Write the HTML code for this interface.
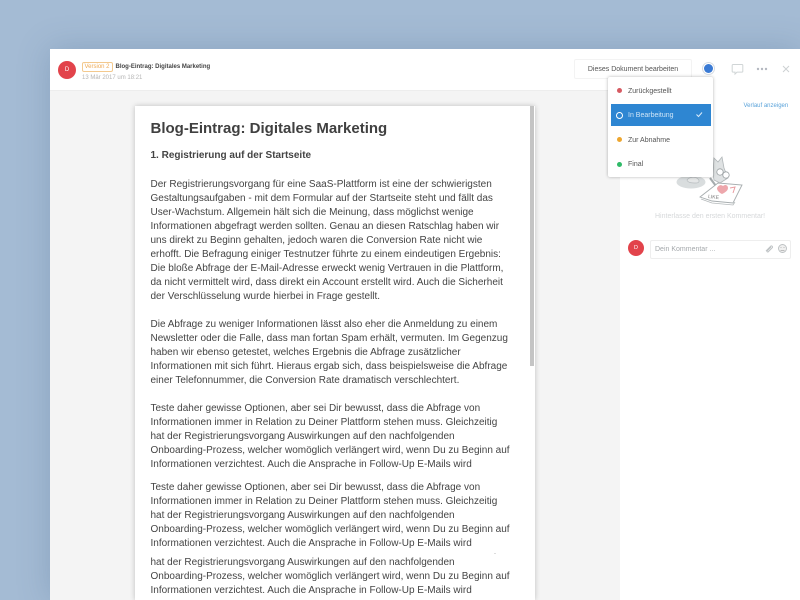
<!DOCTYPE html>
<html><head><meta charset="utf-8">
<style>
html,body{margin:0;padding:0;width:800px;height:600px;overflow:hidden;background:#a4bbd4;font-family:"Liberation Sans",sans-serif}
#app{position:absolute;left:50px;top:49px;width:750px;height:551px;background:#f4f4f4;box-shadow:0 0 30px rgba(60,90,130,.25);overflow:hidden}
.a{position:absolute;white-space:nowrap}
#doc{position:absolute;left:135px;top:106px;width:400px;height:494px;background:#fff;box-shadow:0 0 5px rgba(0,0,0,.22);overflow:hidden}
.l{position:absolute;left:15.5px;white-space:nowrap;font-size:10px;line-height:14px;color:#444}
.m{position:absolute;left:628px;font-size:7px;color:#555;white-space:nowrap;line-height:10px}
.d{position:absolute;left:616.5px;width:5px;height:5px;border-radius:50%}
</style></head><body>
<div id="app"></div>
<div class="a" style="left:50px;top:49px;width:750px;height:41px;background:#fff;border-bottom:1px solid #ededed"></div>
<div class="a" style="left:620px;top:90px;width:180px;height:510px;background:#fff"></div>

<div class="a" style="left:58px;top:61px;width:18px;height:18px;border-radius:50%;background:#e2434b;color:#fff;font-size:6px;line-height:18px;text-align:center">D</div>
<div class="a" style="left:81.5px;top:62px;width:29px;height:8px;border:1px solid #f3c98e;border-radius:2px;color:#eeaa55;font-size:6px;line-height:8px;text-align:center">Version 2</div>
<div class="a" style="left:115.5px;top:63px;font-size:6px;line-height:9px;font-weight:bold;color:#444">Blog-Eintrag: Digitales Marketing</div>
<div class="a" style="left:82px;top:73.5px;font-size:6px;line-height:9px;color:#b5b5b5">13 Mär 2017 um 18:21</div>

<div class="a" style="left:574px;top:59px;width:116px;height:18px;border:1px solid #f3f3f3;border-radius:2px;text-align:center;font-size:7px;line-height:20px;color:#555">Dieses Dokument bearbeiten</div>
<div class="a" style="left:703.5px;top:63.5px;width:9px;height:9px;border-radius:50%;background:#3a7ad4;box-shadow:0 0 0 1px #fff,0 0 0 2px #d6dce3"></div>
<svg class="a" style="left:730px;top:62px" width="15" height="14" viewBox="0 0 15 14"><path d="M3 2.500h9a.8.8 0 0 1 .8.8v6a.8.8 0 0 1-.8.8H7l-2 2v-2H3a.8.8 0 0 1-.8-.8v-6a.8.8 0 0 1 .8-.8z" fill="none" stroke="#d0d5d6" stroke-width="1"/></svg>
<svg class="a" style="left:756px;top:66px" width="12" height="6"><circle cx="2" cy="3" r="1.200" fill="#b4b8c0"/><circle cx="6" cy="3" r="1.200" fill="#b4b8c0"/><circle cx="10" cy="3" r="1.200" fill="#b4b8c0"/></svg>
<svg class="a" style="left:781px;top:64px" width="10" height="10"><path d="M2 2l6 6M8 2l-6 6" stroke="#cdd1d3" stroke-width="1"/></svg>

<div class="a" style="left:743.5px;top:101.5px;font-size:6px;line-height:9px;color:#5ba3da">Verlauf anzeigen</div>

<!-- document -->
<div id="doc">
<div class="l" style="top:12.5px;font-size:15px;line-height:20px;font-weight:bold;color:#404040">Blog-Eintrag: Digitales Marketing</div>
<div class="l" style="top:43px;font-weight:bold">1. Registrierung auf der Startseite</div>
<div class="l" style="top:71.5px">Der Registrierungsvorgang für eine SaaS-Plattform ist eine der schwierigsten</div>
<div class="l" style="top:85.5px">Gestaltungsaufgaben - mit dem Formular auf der Startseite steht und fällt das</div>
<div class="l" style="top:99.5px">User-Wachstum. Allgemein hält sich die Meinung, dass möglichst wenige</div>
<div class="l" style="top:113.5px">Informationen abgefragt werden sollten. Genau an diesen Ratschlag haben wir</div>
<div class="l" style="top:127.5px">uns direkt zu Beginn gehalten, jedoch waren die Conversion Rate nicht wie</div>
<div class="l" style="top:141.5px">erhofft. Die Befragung einiger Testnutzer führte zu einem eindeutigen Ergebnis:</div>
<div class="l" style="top:155.5px">Die bloße Abfrage der E-Mail-Adresse erweckt wenig Vertrauen in die Plattform,</div>
<div class="l" style="top:169.5px">da nicht vermittelt wird, dass direkt ein Account erstellt wird. Auch die Sicherheit</div>
<div class="l" style="top:183.5px">der Verschlüsselung wurde hierbei in Frage gestellt.</div>
<div class="l" style="top:211.5px">Die Abfrage zu weniger Informationen lässt also eher die Anmeldung zu einem</div>
<div class="l" style="top:225.5px">Newsletter oder die Falle, dass man fortan Spam erhält, vermuten. Im Gegenzug</div>
<div class="l" style="top:239.5px">haben wir ebenso getestet, welches Ergebnis die Abfrage zusätzlicher</div>
<div class="l" style="top:253.5px">Informationen mit sich führt. Hieraus ergab sich, dass beispielsweise die Abfrage</div>
<div class="l" style="top:267.5px">einer Telefonnummer, die Conversion Rate dramatisch verschlechtert.</div>
<div class="l" style="top:295.5px">Teste daher gewisse Optionen, aber sei Dir bewusst, dass die Abfrage von</div>
<div class="l" style="top:309.5px">Informationen immer in Relation zu Deiner Plattform stehen muss. Gleichzeitig</div>
<div class="l" style="top:323.5px">hat der Registrierungsvorgang Auswirkungen auf den nachfolgenden</div>
<div class="l" style="top:337.5px">Onboarding-Prozess, welcher womöglich verlängert wird, wenn Du zu Beginn auf</div>
<div class="l" style="top:351.5px">Informationen verzichtest. Auch die Ansprache in Follow-Up E-Mails wird</div>
<div class="l" style="top:374.5px">Teste daher gewisse Optionen, aber sei Dir bewusst, dass die Abfrage von</div>
<div class="l" style="top:388.5px">Informationen immer in Relation zu Deiner Plattform stehen muss. Gleichzeitig</div>
<div class="l" style="top:402.5px">hat der Registrierungsvorgang Auswirkungen auf den nachfolgenden</div>
<div class="l" style="top:416.5px">Onboarding-Prozess, welcher womöglich verlängert wird, wenn Du zu Beginn auf</div>
<div class="l" style="top:430.5px">Informationen verzichtest. Auch die Ansprache in Follow-Up E-Mails wird</div>
<div class="l" style="top:449.5px">hat der Registrierungsvorgang Auswirkungen auf den nachfolgenden</div>
<div class="l" style="top:463.5px">Onboarding-Prozess, welcher womöglich verlängert wird, wenn Du zu Beginn auf</div>
<div class="l" style="top:477.5px">Informationen verzichtest. Auch die Ansprache in Follow-Up E-Mails wird</div>
<div style="position:absolute;left:359px;top:447px;width:2px;height:1px;background:#ddd"></div>
<div style="position:absolute;left:395px;top:0;width:4px;height:260px;background:#c4c4c4"></div>
</div>

<!-- illustration -->
<svg class="a" style="left:670px;top:150px" width="80" height="60" viewBox="0 0 80 60">
<ellipse cx="21" cy="32" rx="14.500" ry="6.500" fill="#d9ddde"/>
<path d="M17 30c2-3 8-4 11-1c2 2 1 4-2 4c-4 0-8 0-9-3z" fill="#e4e6e7" stroke="#b8bdbf" stroke-width=".7"/>
<path d="M43 24L44 8L48 12L52 7L54 18L58 28L50 33L44 30z" fill="#dfe2e3" stroke="#b0b6b8" stroke-width=".8"/>
<circle cx="50" cy="22" r="3.200" fill="#fff" stroke="#9aa0a2" stroke-width=".8"/>
<circle cx="56" cy="25" r="3.200" fill="#fff" stroke="#9aa0a2" stroke-width=".8"/>
<path d="M40 28l9 12" fill="none" stroke="#a6acae" stroke-width="2.200"/>
<path d="M30 47L48 33L72 35L63 53L42 51z" fill="#fff" stroke="#a7adaf" stroke-width=".9"/>
<path d="M31 49L42 53L63 55L65 52" fill="none" stroke="#b4b9bb" stroke-width=".8"/>
<path d="M47 38c2-4 5-3 6-2c2-2 5-1 5 2c0 3-4 5-6 6c-2-1-5-3-5-6z" fill="#eda7ac"/>
<path d="M60 38l5-1l-2 6" fill="none" stroke="#e89ca1" stroke-width="1"/>
<text x="38" y="48" font-size="5" font-family="Liberation Sans" fill="#777" transform="rotate(6 38 48)">LIKE</text>
</svg>

<!-- dropdown -->
<div class="a" style="left:608px;top:77px;width:105px;height:100px;background:#fff;border-radius:2px;box-shadow:0 0 3px rgba(0,0,0,.3)"></div>
<div class="d" style="top:88px;background:#d65a62"></div>
<div class="m" style="top:87px">Zurückgestellt</div>
<div class="a" style="left:610.5px;top:104px;width:100px;height:22px;background:#2e86d2"></div>
<div class="a" style="left:615.5px;top:112px;width:5px;height:5px;border:1px solid #fff;border-radius:50%"></div>
<div class="m" style="top:111px;color:#cfe5f7">In Bearbeitung</div>
<svg class="a" style="left:695px;top:111px" width="8" height="7"><path d="M1.500 3.500l2 2l3.500-4" fill="none" stroke="#dcecf9" stroke-width="1"/></svg>
<div class="d" style="top:137px;background:#eda62f"></div>
<div class="m" style="top:136px">Zur Abnahme</div>
<div class="d" style="top:161.5px;background:#2fba68"></div>
<div class="m" style="top:160px">Final</div>

<div class="a" style="left:655px;top:212px;font-size:7px;line-height:10px;color:#d6d8da">Hinterlasse den ersten Kommentar!</div>
<div class="a" style="left:628px;top:240px;width:16px;height:16px;border-radius:50%;background:#e2434b;color:#fff;font-size:5.5px;line-height:16px;text-align:center">D</div>
<div class="a" style="left:650px;top:240px;width:139px;height:17px;border:1px solid #eeeeee;border-radius:2px;background:#fff"></div>
<div class="a" style="left:655px;top:245px;font-size:7px;line-height:10px;color:#a5a9ac">Dein Kommentar ...</div>
<svg class="a" style="left:764px;top:244px" width="10" height="10"><path d="M2 7L7 2a1.200 1.200 0 0 1 1.500 1.500L4 8a.8.8 0 0 1-1-1l4-4" fill="none" stroke="#bfc3c5" stroke-width="1"/></svg>
<svg class="a" style="left:777px;top:243px" width="11" height="11"><circle cx="5.500" cy="5.500" r="4" fill="#f0f0f0" stroke="#bcc0c2" stroke-width=".9"/><path d="M3.500 4.500h1M6.500 4.500h1M3.500 7.500h4" stroke="#aaa" stroke-width=".8"/></svg>
</body></html>
